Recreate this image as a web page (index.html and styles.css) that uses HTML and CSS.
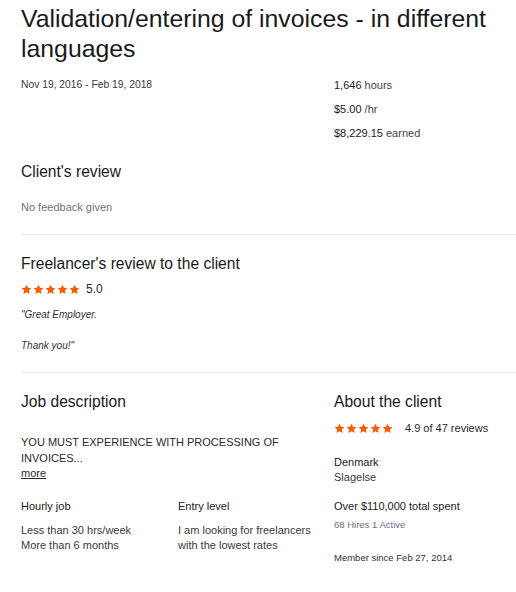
FILE: index.html
```html
<!DOCTYPE html>
<html>
<head>
<meta charset="utf-8">
<link rel="stylesheet" href="styles.css">
</head>
<body>
<main class="page">
  <h1 class="title">Validation/entering of invoices - in different languages</h1>
  <section class="cols summary">
    <div class="col-left"><p class="muted date">Nov 19, 2016 - Feb 19, 2018</p></div>
    <div class="col-right stats">
      <p><strong>1,646</strong> hours</p>
      <p><strong>$5.00</strong> /hr</p>
      <p><strong>$8,229.15</strong> earned</p>
    </div>
  </section>

  <section class="block first">
    <h2 class="h2">Client's review</h2>
    <p class="light nofb">No feedback given</p>
  </section>

  <section class="block bordered">
    <h2 class="h2">Freelancer's review to the client</h2>
    <div class="rating">
      <span class="stars">
        <svg viewBox="0 0 14 14"><path d="M7 0.8l1.9 4.1 4.4 0.5-3.3 3 0.9 4.4L7 10.6 3.1 12.8 4 8.4 0.7 5.4l4.4-0.5z"/></svg>
        <svg viewBox="0 0 14 14"><path d="M7 0.8l1.9 4.1 4.4 0.5-3.3 3 0.9 4.4L7 10.6 3.1 12.8 4 8.4 0.7 5.4l4.4-0.5z"/></svg>
        <svg viewBox="0 0 14 14"><path d="M7 0.8l1.9 4.1 4.4 0.5-3.3 3 0.9 4.4L7 10.6 3.1 12.8 4 8.4 0.7 5.4l4.4-0.5z"/></svg>
        <svg viewBox="0 0 14 14"><path d="M7 0.8l1.9 4.1 4.4 0.5-3.3 3 0.9 4.4L7 10.6 3.1 12.8 4 8.4 0.7 5.4l4.4-0.5z"/></svg>
        <svg viewBox="0 0 14 14"><path d="M7 0.8l1.9 4.1 4.4 0.5-3.3 3 0.9 4.4L7 10.6 3.1 12.8 4 8.4 0.7 5.4l4.4-0.5z"/></svg>
      </span>
      <span class="score">5.0</span>
    </div>
    <p class="quote">"Great Employer.</p>
    <p class="quote q2">Thank you!"</p>
  </section>

  <section class="cols block bordered lower">
    <div class="col-left">
      <h2 class="h2">Job description</h2>
      <p class="desc">YOU MUST EXPERIENCE WITH PROCESSING OF INVOICES...</p>
      <a class="more" href="#">more</a>
      <div class="facts">
        <div>
          <p class="fact-h">Hourly job</p>
          <p class="fact">Less than 30 hrs/week<br>More than 6 months</p>
        </div>
        <div>
          <p class="fact-h">Entry level</p>
          <p class="fact narrow">I am looking for freelancers with the lowest rates</p>
        </div>
      </div>
    </div>
    <div class="col-right">
      <h2 class="h2">About the client</h2>
      <div class="rating rating2">
        <span class="stars">
          <svg viewBox="0 0 14 14"><path d="M7 0.8l1.9 4.1 4.4 0.5-3.3 3 0.9 4.4L7 10.6 3.1 12.8 4 8.4 0.7 5.4l4.4-0.5z"/></svg>
          <svg viewBox="0 0 14 14"><path d="M7 0.8l1.9 4.1 4.4 0.5-3.3 3 0.9 4.4L7 10.6 3.1 12.8 4 8.4 0.7 5.4l4.4-0.5z"/></svg>
          <svg viewBox="0 0 14 14"><path d="M7 0.8l1.9 4.1 4.4 0.5-3.3 3 0.9 4.4L7 10.6 3.1 12.8 4 8.4 0.7 5.4l4.4-0.5z"/></svg>
          <svg viewBox="0 0 14 14"><path d="M7 0.8l1.9 4.1 4.4 0.5-3.3 3 0.9 4.4L7 10.6 3.1 12.8 4 8.4 0.7 5.4l4.4-0.5z"/></svg>
          <svg viewBox="0 0 14 14"><path d="M7 0.8l1.9 4.1 4.4 0.5-3.3 3 0.9 4.4L7 10.6 3.1 12.8 4 8.4 0.7 5.4l4.4-0.5z"/></svg>
        </span>
        <span class="score small">4.9 of 47 reviews</span>
      </div>
      <p class="fact-h loc">Denmark</p>
      <p class="fact">Slagelse</p>
      <p class="fact-h spent">Over $110,000 total spent</p>
      <p class="light tiny">68 Hires 1 Active</p>
      <p class="tiny member">Member since Feb 27, 2014</p>
    </div>
  </section>
</main>
</body>
</html>
```
FILE: styles.css
```css
* { box-sizing: border-box; }
html, body { margin: 0; padding: 0; background: #fff; }
body {
  font-family: "Liberation Sans", Arial, sans-serif;
  color: #1f1f1f;
}
p { margin: 0; }
.page { padding: 4px 0 0 21px; }
.title {
  margin: 0;
  font-size: 24.8px;
  font-weight: 400;
  line-height: 29.5px;
  color: #1a1a1a;
  padding-right: 20px;
}
.cols { display: flex; }
.col-left { width: 313px; flex: none; }
.col-right { flex: 1; }
.summary { margin-top: 15px; font-size: 11px; line-height: 14px; }
.date { font-size: 10.3px; }
.muted { color: #3a3a3a; }
.stats p { margin-bottom: 10px; color: #444; }
.stats strong { font-weight: 400; color: #1a1a1a; }
.bordered { border-top: 1px solid #e4e8ee; }
.h2 {
  margin: 0;
  font-size: 15.6px;
  font-weight: 400;
  line-height: 20px;
  color: #1a1a1a;
}
.first { padding-top: 12px; }
.light { color: #6b7280; }
.nofb { font-size: 11px; line-height: 14px; margin-top: 18px; padding-bottom: 20px; }
.bordered { padding-top: 19px; }
.rating { display: flex; align-items: center; margin-top: 8px; }
.stars { display: flex; gap: 1px; }
.stars svg { width: 11px; height: 11px; fill: #ff5a00; }
.score { margin-left: 6px; font-size: 12px; color: #2a2a2a; }
.score.small { font-size: 11px; margin-left: 12px; }
.quote { font-size: 10px; font-style: italic; line-height: 14px; color: #333; margin-top: 12px; }
.quote.q2 { margin-top: 17px; padding-bottom: 19px; }
.lower { padding-top: 19px; }
.desc { font-size: 11px; line-height: 15.5px; margin-top: 23px; color: #2a2a2a; padding-right: 40px; }
.more { display: block; width: max-content; font-size: 11px; line-height: 15.5px; color: #2a2a2a; text-decoration: underline; }
.facts { display: grid; grid-template-columns: 157px 1fr; margin-top: 17px; }
.fact-h { font-size: 11px; line-height: 15px; color: #1a1a1a; }
.fact { font-size: 11px; line-height: 15px; color: #3a3a3a; }
.facts .fact { margin-top: 9px; }
.narrow { max-width: 140px; }
.rating2 { margin-top: 10px; }
.loc { margin-top: 21px; }
.spent { margin-top: 14px; }
.tiny { font-size: 9.5px; line-height: 12px; margin-top: 5px; }
.member { margin-top: 21px; color: #333; }
```
